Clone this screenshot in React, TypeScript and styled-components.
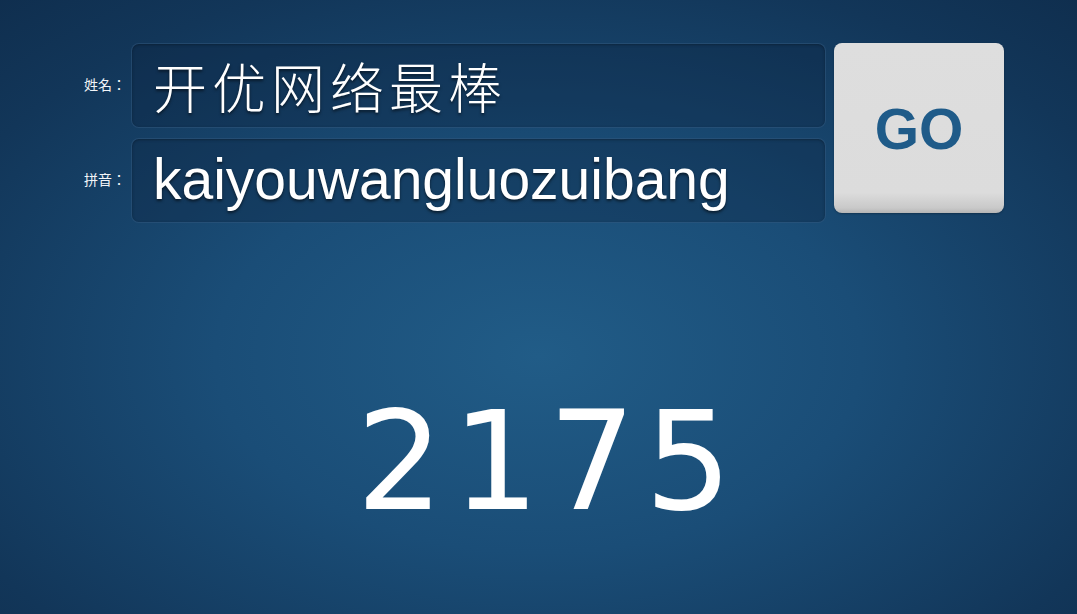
import React from 'react';
import styled, { createGlobalStyle } from 'styled-components';

const GlobalStyle = createGlobalStyle`
  html, body {
    margin: 0;
    padding: 0;
    height: 100%;
  }
  body {
    font-family: 'Liberation Sans', 'Noto Sans CJK SC', sans-serif;
    background: #123557;
  }
`;

const fields = [
  { label: '姓名：', value: '开优网络最棒', cjk: true },
  { label: '拼音：', value: 'kaiyouwangluozuibang', cjk: false },
];

export default function App() {
  return (
    <>
      <GlobalStyle />
      <Page>
        <Form>
          <Fields>
            {fields.map((f) => (
              <Field key={f.label}>
                <Label>{f.label}</Label>
                <InputBox>
                  <InputText $cjk={f.cjk}>{f.value}</InputText>
                </InputBox>
              </Field>
            ))}
          </Fields>
          <GoButton>GO</GoButton>
        </Form>
        <Result>2175</Result>
      </Page>
    </>
  );
}

const Page = styled.div`
  width: 100vw;
  height: 100vh;
  overflow: hidden;
  box-sizing: border-box;
  padding-top: 43px;
  background: radial-gradient(ellipse 75% 80% at 50% 58%, #215c87 0%, #1a4d77 40%, #123659 80%, #0f2e4e 100%);
  display: flex;
  flex-direction: column;
`;

const Form = styled.div`
  display: flex;
  align-items: flex-start;
  padding-left: 84px;
  gap: 8px;
`;

const Fields = styled.div`
  display: flex;
  flex-direction: column;
  gap: 10px;
`;

const Field = styled.div`
  display: flex;
  align-items: center;
`;

const Label = styled.div`
  width: 47px;
  font-size: 14px;
  color: #f2f5f8;
  font-family: 'Noto Sans CJK TC', sans-serif;
  margin-top: -4px;
`;

const InputBox = styled.div`
  width: 695px;
  height: 85px;
  box-sizing: border-box;
  border-radius: 8px;
  background: rgba(10, 30, 55, 0.3);
  border: 1px solid rgba(80, 130, 175, 0.3);
  box-shadow: inset 0 1px 3px rgba(0, 0, 0, 0.3);
  display: flex;
  align-items: center;
  padding-left: 21px;
`;

const InputText = styled.div<{ $cjk: boolean }>`
  color: #ffffff;
  font-size: ${(p) => (p.$cjk ? '54px' : '57px')};
  font-family: ${(p) =>
    p.$cjk ? "'Noto Sans CJK SC', serif" : "'Liberation Sans', Arial, sans-serif"};
  font-weight: ${(p) => (p.$cjk ? 300 : 400)};
  line-height: 1;
  margin-top: ${(p) => (p.$cjk ? '0' : '-2px')};
  letter-spacing: ${(p) => (p.$cjk ? '5px' : '0')};
  text-shadow: 0 2px 3px rgba(0, 0, 0, 0.55);
  white-space: nowrap;
`;

const GoButton = styled.div`
  width: 170px;
  height: 170px;
  border-radius: 8px;
  background: linear-gradient(to bottom, #dedede 0%, #dcdcdc 88%, #c9c9c9 97%, #b5b5b5 100%);
  box-shadow: 0 1px 2px rgba(0, 0, 0, 0.25);
  display: flex;
  align-items: center;
  justify-content: center;
  color: #1f5b89;
  font-family: 'Liberation Sans', Arial, sans-serif;
  font-weight: 700;
  font-size: 57px;
  padding-top: 2px;
  box-sizing: border-box;
`;

const Result = styled.div`
  margin-top: 170px;
  text-align: center;
  padding-left: 20px;
  font-family: 'DejaVu Sans', Verdana, sans-serif;
  font-size: 137px;
  line-height: 1;
  color: #ffffff;
  letter-spacing: 9px;
`;
